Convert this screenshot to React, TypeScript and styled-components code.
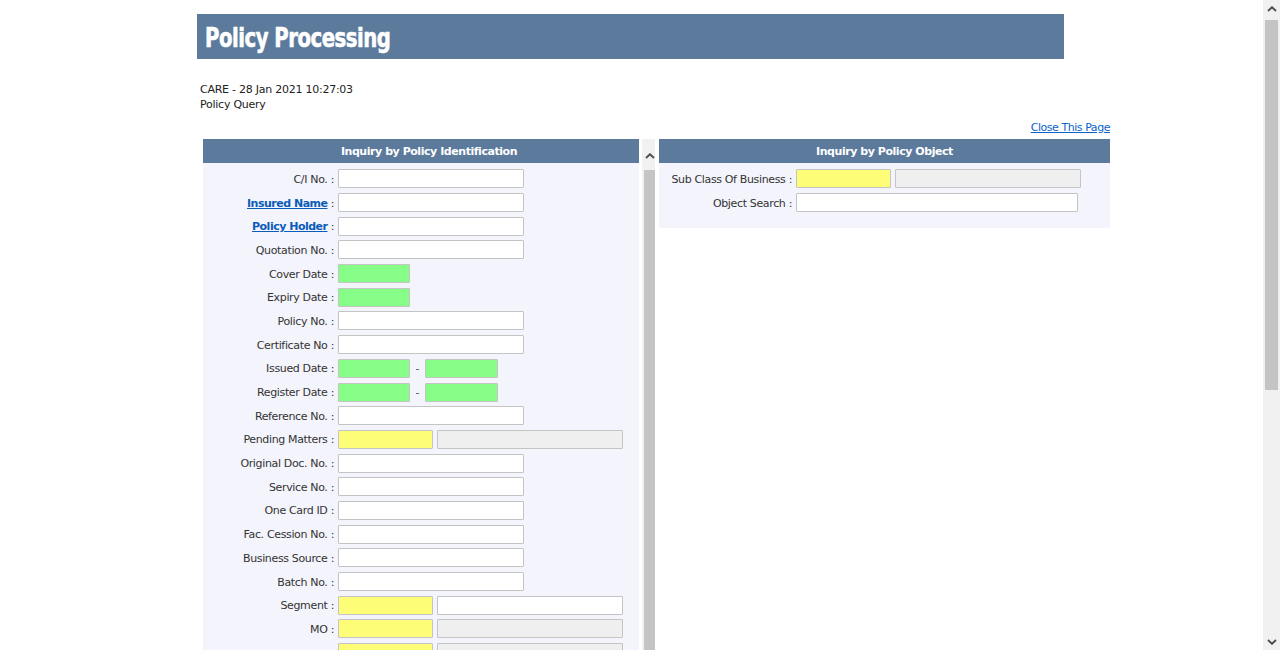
import React from 'react';
import styled, { createGlobalStyle } from 'styled-components';

const GlobalStyle = createGlobalStyle`
  html, body {
    margin: 0;
    padding: 0;
    background: #fff;
    font-family: Verdana, "DejaVu Sans", sans-serif;
    font-size: 11px;
    color: #333;
  }
`;

type Kind = 'text' | 'date' | 'range' | 'lookup' | 'lookupOpen';

interface Field {
  label: string;
  link?: boolean;
  kind: Kind;
}

const leftFields: Field[] = [
  { label: 'C/I No.', kind: 'text' },
  { label: 'Insured Name', link: true, kind: 'text' },
  { label: 'Policy Holder', link: true, kind: 'text' },
  { label: 'Quotation No.', kind: 'text' },
  { label: 'Cover Date', kind: 'date' },
  { label: 'Expiry Date', kind: 'date' },
  { label: 'Policy No.', kind: 'text' },
  { label: 'Certificate No', kind: 'text' },
  { label: 'Issued Date', kind: 'range' },
  { label: 'Register Date', kind: 'range' },
  { label: 'Reference No.', kind: 'text' },
  { label: 'Pending Matters', kind: 'lookup' },
  { label: 'Original Doc. No.', kind: 'text' },
  { label: 'Service No.', kind: 'text' },
  { label: 'One Card ID', kind: 'text' },
  { label: 'Fac. Cession No.', kind: 'text' },
  { label: 'Business Source', kind: 'text' },
  { label: 'Batch No.', kind: 'text' },
  { label: 'Segment', kind: 'lookupOpen' },
  { label: 'MO', kind: 'lookup' },
  { label: '', kind: 'lookup' },
  { label: '', kind: 'lookup' },
];

export default function App() {
  return (
    <>
      <GlobalStyle />
      <Screen>
        <Viewport>
          <TitleBar>
            <Title>Policy Processing</Title>
          </TitleBar>
          <Content>
            <Meta>
              <div>CARE - 28 Jan 2021 10:27:03</div>
              <div>Policy Query</div>
            </Meta>
            <CloseRow>
              <CloseLink href="#">Close This Page</CloseLink>
            </CloseRow>
            <Panels>
              <Scroller>
                <Panel>
                  <PanelHeader $shift={16}>Inquiry by Policy Identification</PanelHeader>
                  <FormGrid $labelWidth={131}>
                    {leftFields.map((f, i) => (
                      <FieldRow key={i} field={f} />
                    ))}
                  </FormGrid>
                </Panel>
                <ScrollBar width={16} topGap={8} thumbGap={6} thumb={700} />
              </Scroller>
              <Panel $grow>
                <PanelHeader>Inquiry by Policy Object</PanelHeader>
                <FormGrid $labelWidth={133} $bottom={14}>
                  <Label>Sub Class Of Business :</Label>
                  <Inputs>
                    <Box $tone="yellow" $w={95} />
                    <Box $tone="gray" $w={186} />
                  </Inputs>
                  <Label>Object Search :</Label>
                  <Inputs>
                    <Box $w={282} />
                  </Inputs>
                </FormGrid>
              </Panel>
            </Panels>
          </Content>
        </Viewport>
        <ScrollBar width={17} topGap={0} thumbGap={3} thumb={370} withDown />
      </Screen>
    </>
  );
}

function FieldRow({ field }: { field: Field }) {
  const { label, link, kind } = field;
  return (
    <>
      <Label>
        {label && (link ? <LabelLink href="#">{label}</LabelLink> : label)}
        {label && ' :'}
      </Label>
      <Inputs>
        {kind === 'text' && <Box $w={186} />}
        {kind === 'date' && <Box $tone="green" $w={72} />}
        {kind === 'range' && (
          <>
            <Box $tone="green" $w={72} />
            <Dash>-</Dash>
            <Box $tone="green" $w={73} />
          </>
        )}
        {kind === 'lookup' && (
          <>
            <Box $tone="yellow" $w={95} />
            <Box $tone="gray" $w={186} />
          </>
        )}
        {kind === 'lookupOpen' && (
          <>
            <Box $tone="yellow" $w={95} />
            <Box $w={186} />
          </>
        )}
      </Inputs>
    </>
  );
}

function Chevron({ down }: { down?: boolean }) {
  return (
    <svg width="10" height="6" viewBox="0 0 10 6">
      <path
        d={down ? 'M1 1 L5 4.8 L9 1' : 'M1 5 L5 1.2 L9 5'}
        fill="none"
        stroke="#505050"
        strokeWidth="1.9"
      />
    </svg>
  );
}

interface ScrollBarProps {
  width: number;
  topGap: number;
  thumbGap: number;
  thumb: number;
  withDown?: boolean;
}

function ScrollBar({ width, topGap, thumbGap, thumb, withDown }: ScrollBarProps) {
  return (
    <Rail $w={width}>
      <RailButton $offset={topGap}>
        <Chevron />
      </RailButton>
      <Track>
        <Thumb $gap={thumbGap} $h={thumb} />
      </Track>
      {withDown && (
        <RailButton $offset={0}>
          <Chevron down />
        </RailButton>
      )}
    </Rail>
  );
}

const Screen = styled.div`
  display: flex;
  height: 100vh;
  overflow: hidden;
`;

const Viewport = styled.div`
  flex: 1;
  min-width: 0;
  padding-top: 14px;
  overflow: hidden;
`;

const Rail = styled.div<{ $w: number }>`
  width: ${p => p.$w}px;
  flex-shrink: 0;
  background: #f1f1f1;
  display: flex;
  flex-direction: column;
`;

const RailButton = styled.div<{ $offset: number }>`
  height: 17px;
  margin-top: ${p => p.$offset}px;
  display: flex;
  align-items: center;
  justify-content: center;
  flex-shrink: 0;
`;

const Track = styled.div`
  flex: 1;
  padding: 0 2px;
`;

const Thumb = styled.div<{ $gap: number; $h: number }>`
  margin-top: ${p => p.$gap}px;
  height: ${p => p.$h}px;
  background: #c4c4c4;
`;

const TitleBar = styled.div`
  width: 867px;
  height: 45px;
  margin-left: 197px;
  background: #5b7a9c;
  display: flex;
  align-items: center;
  padding-left: 8px;
  box-sizing: border-box;
  overflow: hidden;
`;

const Title = styled.h1`
  margin: 2px 0 0;
  color: #fff;
  font-family: Impact, "DejaVu Sans Condensed", sans-serif;
  font-weight: bold;
  font-size: 27px;
  letter-spacing: -0.6px;
  -webkit-text-stroke: 0.6px #fff;
  transform: scaleX(0.81);
  transform-origin: left center;
  white-space: nowrap;
`;

const Content = styled.div`
  width: 910px;
  margin-left: 200px;
`;

const Meta = styled.div`
  margin-top: 23px;
  line-height: 15px;
  color: #222;
  letter-spacing: -0.25px;
`;

const CloseRow = styled.div`
  margin-top: 8px;
  text-align: right;
  line-height: 15px;
`;

const CloseLink = styled.a`
  color: #0a63c9;
  text-decoration: underline;
  letter-spacing: -0.45px;
`;

const Panels = styled.div`
  margin-top: 4px;
  padding-left: 3px;
  display: flex;
  align-items: flex-start;
  gap: 4px;
`;

const Scroller = styled.div`
  width: 452px;
  height: 760px;
  display: flex;
  flex-shrink: 0;
  overflow: hidden;

  > div:first-child {
    width: 436px;
    flex-shrink: 0;
  }
`;

const Panel = styled.div<{ $grow?: boolean }>`
  background: #f4f4fc;
  ${p => (p.$grow ? 'flex: 1;' : 'height: 100%; margin-right: 3px;')}
`;

const PanelHeader = styled.div<{ $shift?: number }>`
  height: 24px;
  background: #5b7a9c;
  color: #fff;
  font-weight: bold;
  text-align: center;
  line-height: 26px;
  letter-spacing: -0.45px;
  padding-left: ${p => p.$shift ?? 0}px;
`;

const FormGrid = styled.div<{ $labelWidth: number; $bottom?: number }>`
  display: grid;
  grid-template-columns: ${p => p.$labelWidth}px 1fr;
  grid-auto-rows: 23.7px;
  column-gap: 4px;
  align-items: center;
  padding-top: 4px;
  padding-bottom: ${p => p.$bottom ?? 0}px;
`;

const Label = styled.div`
  text-align: right;
  white-space: nowrap;
  color: #333;
  letter-spacing: -0.35px;
  padding-top: 1px;
`;

const LabelLink = styled.a`
  color: #0b5cb8;
  font-weight: bold;
  text-decoration: underline;
  letter-spacing: -0.5px;
`;

const Inputs = styled.div`
  display: flex;
  align-items: center;
  gap: 4px;
`;

const tones = {
  white: '#ffffff',
  green: '#86fd86',
  yellow: '#fdfd78',
  gray: '#efefef',
};

const Box = styled.input.attrs({ type: 'text' })<{ $tone?: keyof typeof tones; $w: number }>`
  width: ${p => p.$w}px;
  height: 19px;
  box-sizing: border-box;
  margin: 0;
  padding: 1px 3px;
  border: 1px solid #c4c4c4;
  border-radius: 1px;
  background: ${p => tones[p.$tone ?? 'white']};
  font: inherit;
  outline: none;
`;

const Dash = styled.span`
  width: 7px;
  text-align: center;
  color: #555;
`;
